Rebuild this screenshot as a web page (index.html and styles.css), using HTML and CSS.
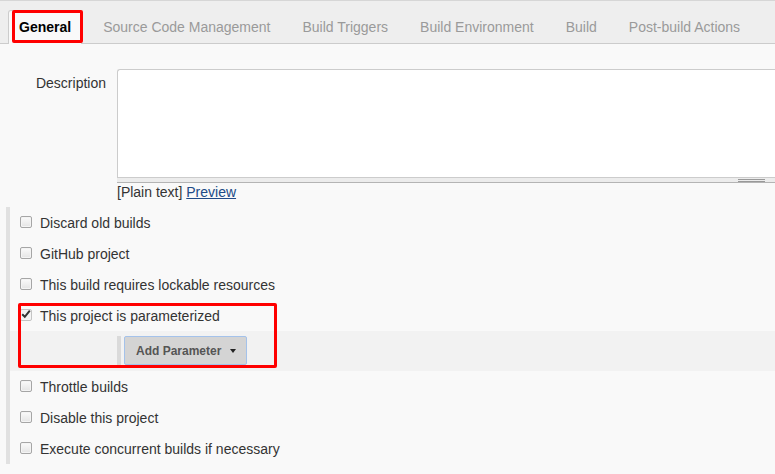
FILE: index.html
```html
<!DOCTYPE html>
<html>
<head>
<meta charset="utf-8">
<link rel="stylesheet" href="styles.css">
</head>
<body>
<div class="tabbar">
  <div class="tab active">General</div>
  <div class="tab">Source Code Management</div>
  <div class="tab">Build Triggers</div>
  <div class="tab">Build Environment</div>
  <div class="tab">Build</div>
  <div class="tab">Post-build Actions</div>
</div>

<div class="desc-row">
  <div class="desc-label">Description</div>
  <div class="desc-field">
    <div class="textarea"></div>
    <div class="handle"><span class="grip"></span></div>
    <div class="syntax">[Plain text] <a href="#">Preview</a></div>
  </div>
</div>

<div class="section">
  <div class="row"><span class="cb"></span><span>Discard old builds</span></div>
  <div class="row"><span class="cb"></span><span>GitHub project</span></div>
  <div class="row"><span class="cb"></span><span>This build requires lockable resources</span></div>
  <div class="row"><span class="cb checked"><svg width="12" height="12" viewBox="0 0 12 12"><path d="M2.2 6.2 L4.8 8.8 L9.8 2.6" fill="none" stroke="#333" stroke-width="2"/></svg></span><span>This project is parameterized</span></div>
  <div class="nested">
    <div class="nested-inner">
      <button class="btn">Add Parameter<span class="caret"></span></button>
    </div>
  </div>
  <div class="row"><span class="cb"></span><span>Throttle builds</span></div>
  <div class="row"><span class="cb"></span><span>Disable this project</span></div>
  <div class="row"><span class="cb"></span><span>Execute concurrent builds if necessary</span></div>
</div>

<div class="mark mark-tab"></div>
<div class="mark mark-param"></div>
</body>
</html>
```

FILE: styles.css
```css
html, body {
  margin: 0;
  padding: 0;
  overflow: hidden;
}
body {
  background: #f9f9f9;
  font-family: "Liberation Sans", Arial, sans-serif;
  color: #333;
  position: relative;
  width: 775px;
  height: 474px;
}
.tabbar {
  display: flex;
  align-items: flex-end;
  gap: 10px;
  padding-left: 8px;
  height: 42px;
  background: #eeeeee;
  border-top: 1px solid #d6d6d6;
  border-bottom: 1px solid #cccccc;
}
.tab {
  height: 31px;
  margin-bottom: -1px;
  padding: 0 10px 2px;
  border: 1px solid transparent;
  border-bottom: none;
  display: flex;
  align-items: center;
  font-size: 14px;
  color: #9a9a9a;
  white-space: nowrap;
}
.tab.active {
  background: #f9f9f9;
  border-color: #cccccc;
  border-radius: 3px 3px 0 0;
  color: #000;
  font-weight: bold;
}
.desc-row {
  display: flex;
  margin-top: 25px;
}
.desc-label {
  width: 106px;
  text-align: right;
  font-size: 14px;
  line-height: 16px;
  padding-top: 6px;
  flex: none;
}
.desc-field {
  margin-left: 11px;
  flex: none;
  width: 658px;
}
.textarea {
  height: 107px;
  background: #fff;
  border: 1px solid #cccccc;
  border-right: none;
  border-radius: 3px 0 0 0;
}
.handle {
  height: 4px;
  background: #ececec;
  border-bottom: 1px solid #b4b4b4;
  position: relative;
}
.grip {
  position: absolute;
  left: 621px;
  top: 1px;
  width: 27px;
  height: 1px;
  border-top: 1px solid #999;
  border-bottom: 1px solid #999;
}
.syntax {
  font-size: 14px;
  line-height: 16px;
  margin-top: 1px;
}
.syntax a {
  color: #204a87;
  text-decoration: underline;
}
.section {
  margin-top: 7px;
  margin-left: 6px;
  border-left: 4px solid #e1e1e1;
}
.row {
  height: 31px;
  display: flex;
  align-items: center;
  gap: 8px;
  padding-left: 10px;
  font-size: 14px;
  color: #333;
}
.cb {
  width: 10px;
  height: 10px;
  border: 1px solid #a6a6a6;
  border-radius: 2px;
  background: linear-gradient(#fbfbfb, #e4e4e4);
  box-shadow: inset 0 0 0 1px #f4f4f4;
  margin-top: -2px;
  position: relative;
  flex: none;
}
.cb.checked {
  background: #f1f1f1;
  border-color: #c4c4c4;
}
.cb svg {
  position: absolute;
  left: -1px;
  top: -2px;
}
.nested {
  height: 35px;
  padding: 5px 0 0 107px;
  background: #f2f2f2;
}
.nested-inner {
  height: 31px;
  border-left: 4px solid #dadada;
  padding-left: 3px;
}
.btn {
  height: 29px;
  width: 123px;
  margin: 0;
  padding: 0 0 0 11px;
  display: flex;
  align-items: center;
  background: #d4d4d4;
  border: 1px solid #a4c2ea;
  border-radius: 2px;
  font-family: "Liberation Sans", Arial, sans-serif;
  font-size: 12px;
  font-weight: bold;
  color: #555;
}
.caret {
  width: 0;
  height: 0;
  margin-left: 9px;
  border-left: 3.5px solid transparent;
  border-right: 3.5px solid transparent;
  border-top: 4px solid #222;
}
.mark {
  position: absolute;
  border: 3px solid #ff0000;
  border-radius: 2px;
  box-sizing: border-box;
}
.mark-tab {
  left: 12px;
  top: 10px;
  width: 71px;
  height: 33px;
}
.mark-param {
  left: 18px;
  top: 303px;
  width: 259px;
  height: 65px;
}
```
